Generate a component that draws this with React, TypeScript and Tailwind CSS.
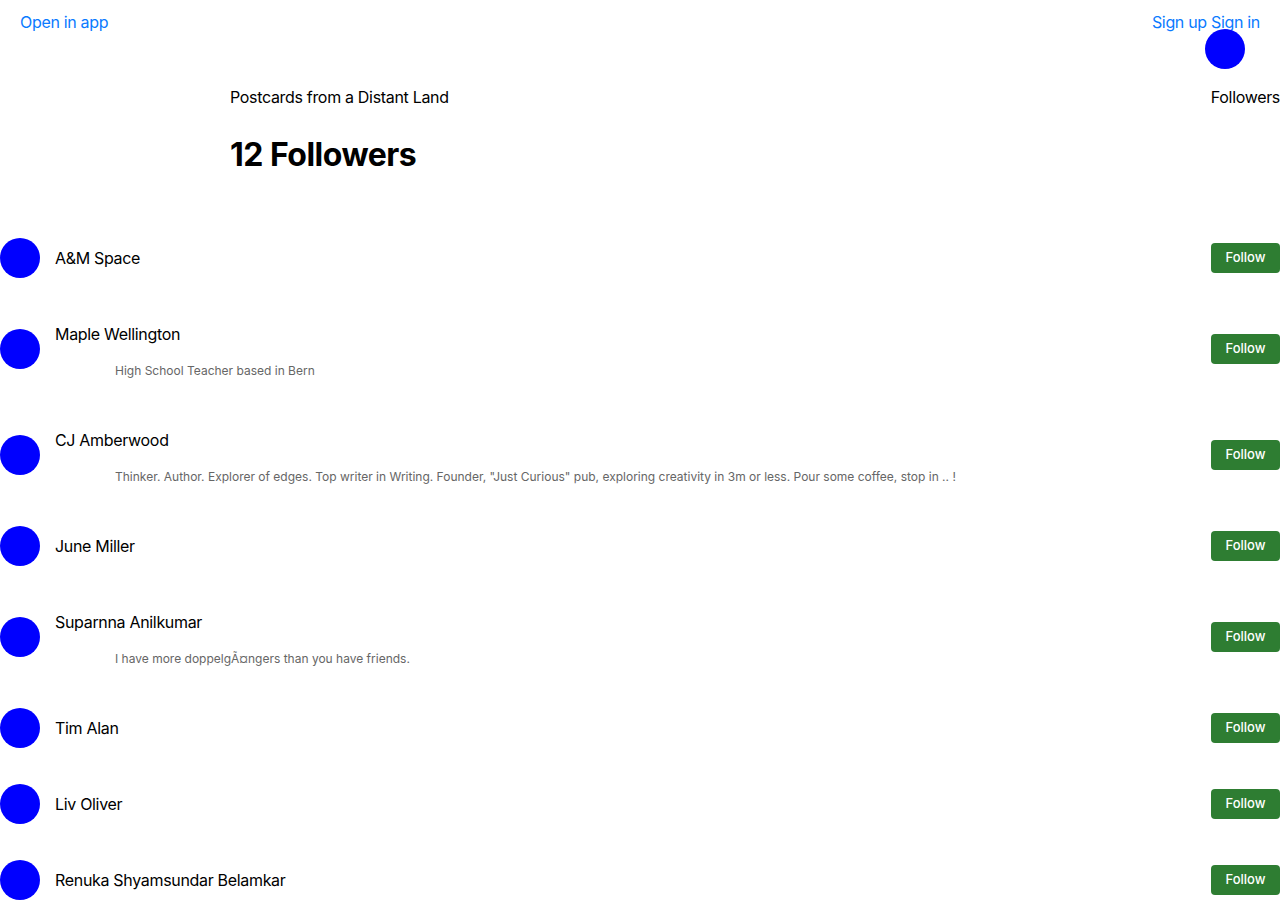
const followers = [
  { name: "A&M Space" },
  { name: "Maple Wellington", bio: "High School Teacher based in Bern" },
  {
    name: "CJ Amberwood",
    bio: 'Thinker. Author. Explorer of edges. Top writer in Writing. Founder, "Just Curious" pub, exploring creativity in 3m or less. Pour some coffee, stop in .. !',
  },
  { name: "June Miller" },
  { name: "Suparnna Anilkumar", bio: "I have more doppelgÃ¤ngers than you have friends." },
  { name: "Tim Alan" },
  { name: "Liv Oliver" },
  { name: "Renuka Shyamsundar Belamkar" },
]

function Avatar() {
  return <div className="h-10 w-10 shrink-0 rounded-full bg-[#0000ff]" />
}

function FollowerRow({ name, bio }: { name: string; bio?: string }) {
  return (
    <div className="flex items-center justify-between">
      <div className="flex items-center">
        <Avatar />
        <div className="ml-[15px]">
          <div className="flex h-10 items-center text-base leading-5 tracking-[-0.02em] text-black">{name}</div>
          {bio && <p className="mt-[9px] mb-[5px] ml-[60px] text-xs leading-4 text-[#666666]">{bio}</p>}
        </div>
      </div>
      <button className="h-[30px] w-[69px] rounded-[4px] bg-[#2e7d32] text-[13px] font-medium text-white">
        Follow
      </button>
    </div>
  )
}

export default function App() {
  return (
    <div className="min-h-screen bg-white font-['Inter',sans-serif] text-black">
      <header className="flex justify-between px-5 pt-3 text-base leading-5 tracking-[-0.02em] text-[#0a7aff]">
        <a href="#">Open in app</a>
        <div>
          <a href="#">Sign up</a> <a href="#">Sign in</a>
        </div>
      </header>
      <div className="-mt-[3px] flex justify-end pr-[35px]">
        <Avatar />
      </div>
      <div className="mt-[18px] flex justify-between pl-[230px] text-base leading-5 tracking-[-0.02em]">
        <span>Postcards from a Distant Land</span>
        <span>Followers</span>
      </div>
      <h1 className="mt-7 pl-[230px] text-[32px] leading-[39px] font-bold tracking-[-0.016em]">12 Followers</h1>
      <div className="mt-16 flex flex-col gap-9">
        {followers.map((f) => (
          <FollowerRow key={f.name} name={f.name} bio={f.bio} />
        ))}
      </div>
    </div>
  )
}
